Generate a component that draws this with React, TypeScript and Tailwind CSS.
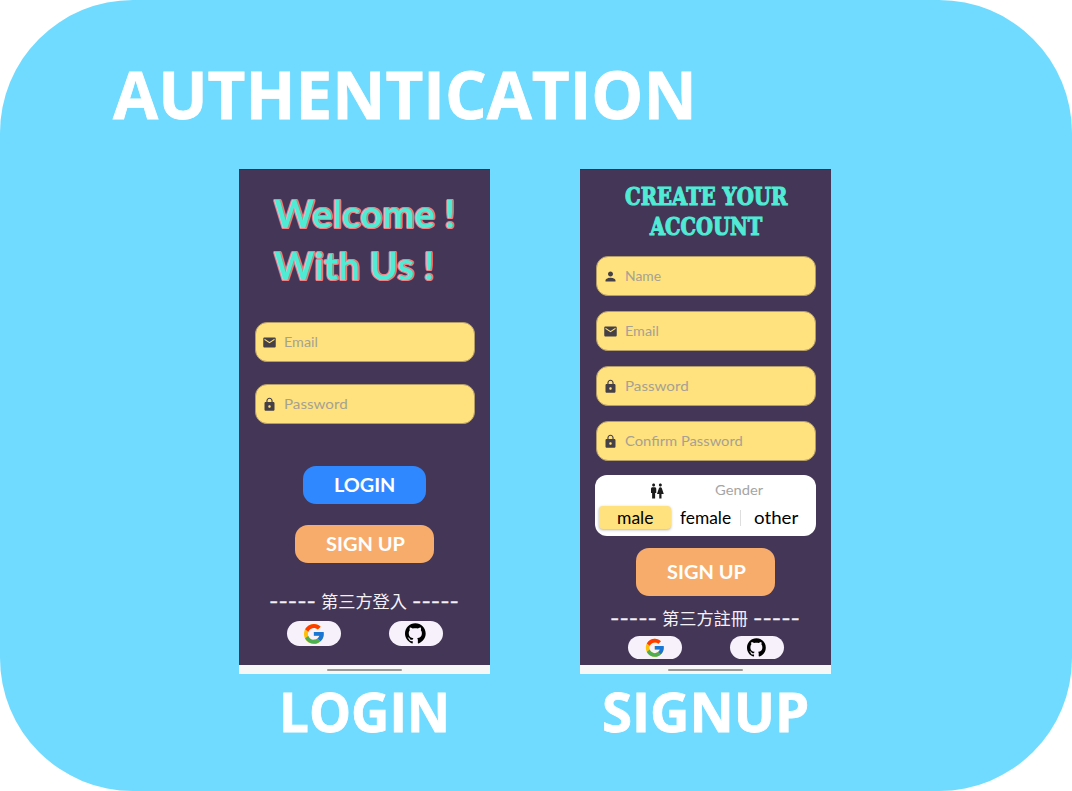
import { useLayoutEffect, useRef, useState } from "react";
import type { ReactNode } from "react";
import { MdPerson, MdEmail, MdLock, MdWc } from "react-icons/md";
import { FcGoogle } from "react-icons/fc";
import { SiGithub } from "react-icons/si";

/** One line of text, stretched horizontally so that it spans `width` pixels. */
function FitText({ width, className = "", children }: { width: number; className?: string; children: ReactNode }) {
  const ref = useRef<HTMLSpanElement>(null);
  const [scale, setScale] = useState(1);
  useLayoutEffect(() => {
    if (ref.current) setScale(width / ref.current.offsetWidth);
  }, [width]);
  return (
    <span className="block shrink-0" style={{ width }}>
      <span
        ref={ref}
        className={`inline-block origin-left align-top whitespace-pre ${className}`}
        style={{ transform: `scaleX(${scale})` }}
      >
        {children}
      </span>
    </span>
  );
}

function Field({ icon, label, width }: { icon: ReactNode; label: string; width: number }) {
  return (
    <div className="flex h-10 w-[220px] shrink-0 items-center rounded-[12px] border border-[#b59d69] bg-[#ffe17d] pl-[6px] text-[15px] text-[#454047]">
      {icon}
      <div className="ml-[7px] pt-[2px]">
        <FitText width={width} className="text-[13.5px] leading-5 text-[#a5a294]">{label}</FitText>
      </div>
    </div>
  );
}

function Divider({ text }: { text: string }) {
  return (
    <div className="mr-px flex h-6 items-center justify-center gap-[5px] text-[#f4f1f6]">
      <FitText width={47} className="pb-[2px] text-[21px] leading-6 [-webkit-text-stroke:0.3px_#f4f1f6]">-----</FitText>
      <FitText width={86} className="text-[17px] leading-6">{text}</FitText>
      <FitText width={47} className="pb-[2px] text-[21px] leading-6 [-webkit-text-stroke:0.3px_#f4f1f6]">-----</FitText>
    </div>
  );
}

function Providers({ compact = false }: { compact?: boolean }) {
  const pill = compact ? "h-[23px] text-[20px]" : "h-[25px] text-[22px]";
  return (
    <div className="flex justify-center gap-12">
      <button className={`flex w-[54px] items-center justify-center rounded-full bg-[#f6f1fa] ${pill}`}>
        <FcGoogle className="size-[1.08em]" />
      </button>
      <button className={`flex w-[54px] items-center justify-center rounded-full bg-[#f6f1fa] text-black ${pill}`}>
        <SiGithub className="size-[0.94em]" />
      </button>
    </div>
  );
}

function Phone({ children }: { children: ReactNode }) {
  return (
    <section className="flex h-[505px] w-[251px] flex-col border-t border-[#3c304c] bg-[#443657] font-['Lato','Noto_Sans_CJK_TC',sans-serif]">
      <div className="flex min-h-0 flex-1 flex-col items-center">{children}</div>
      <div className="flex h-[9px] items-center justify-center bg-[#f7f7f7]">
        <div className="h-[2px] w-[75px] rounded-full bg-[#999]" />
      </div>
    </section>
  );
}

const heroText =
  "text-[38px] font-bold leading-[52px] text-[#50ebd5] [text-shadow:1.3px_0_#f47f86,-1.3px_0_#f47f86,0_1.3px_#f47f86,0_-1.3px_#f47f86,1px_1px_#f47f86,-1px_1px_#f47f86,1px_-1px_#f47f86,-1px_-1px_#f47f86]";
const actionText = "text-[19.5px] font-bold leading-6 text-white";
const titleText =
  "font-['DejaVu_Serif',serif] text-[25px] font-bold leading-[30px] text-[#50ebd5] [-webkit-text-stroke:1.2px_#50ebd5]";

function LoginScreen() {
  return (
    <Phone>
      <div className="mt-[17px] w-[182px]">
        <FitText width={181} className={heroText}>Welcome !</FitText>
        <FitText width={160} className={heroText}>With Us !</FitText>
      </div>
      <div className="mt-[31px] flex flex-col gap-[22px]">
        <Field icon={<MdEmail />} label="Email" width={34} />
        <Field icon={<MdLock />} label="Password" width={64} />
      </div>
      <button className="mt-[42px] flex h-[38px] w-[123px] items-center justify-center rounded-[13px] bg-[#2f88ff]">
        <FitText width={61} className={actionText}>LOGIN</FitText>
      </button>
      <button className="mt-[21px] flex h-[38px] w-[139px] items-center justify-center rounded-[13px] bg-[#f7ac6c]">
        <FitText width={79} className={actionText}>SIGN UP</FitText>
      </button>
      <div className="mt-[27px]">
        <Divider text="第三方登入" />
      </div>
      <div className="mt-[7px]">
        <Providers />
      </div>
    </Phone>
  );
}

function SignupScreen() {
  return (
    <Phone>
      <div className="mt-[12px] flex flex-col items-center">
        <FitText width={162} className={titleText}>CREATE YOUR</FitText>
        <FitText width={112} className={titleText}>ACCOUNT</FitText>
      </div>
      <div className="mt-[14px] flex flex-col gap-[15px]">
        <Field icon={<MdPerson />} label="Name" width={36} />
        <Field icon={<MdEmail />} label="Email" width={34} />
        <Field icon={<MdLock />} label="Password" width={64} />
        <Field icon={<MdLock />} label="Confirm Password" width={118} />
      </div>
      <div className="mt-[14px] flex h-[61px] w-[221px] shrink-0 flex-col rounded-[12px] bg-white px-1 pt-[5px]">
        <div className="flex h-[21px] items-center pl-[49px]">
          <MdWc className="size-[18px] text-[#1c1c1c]" />
          <div className="ml-[49px] pt-[2px]">
            <FitText width={48} className="text-[13.5px] leading-5 text-[#a5a5a5]">Gender</FitText>
          </div>
        </div>
        <div className="mt-[5px] flex h-[23px] items-center text-[17px] leading-[23px] text-black">
          <div className="flex h-[23px] w-[72px] items-center justify-center rounded-[4px] bg-[#ffe17d] shadow-[0_1px_3px_rgba(0,0,0,0.3)]">
            <FitText width={36}>male</FitText>
          </div>
          <div className="flex w-[69px] justify-center">
            <FitText width={51}>female</FitText>
          </div>
          <div className="h-4 w-px bg-[#dedede]" />
          <div className="flex w-[70px] justify-center">
            <FitText width={44}>other</FitText>
          </div>
        </div>
      </div>
      <button className="mt-[12px] flex h-[48px] w-[139px] shrink-0 items-center justify-center rounded-[13px] bg-[#f7ac6c]">
        <FitText width={79} className={actionText}>SIGN UP</FitText>
      </button>
      <div className="mt-[11px]">
        <Divider text="第三方註冊" />
      </div>
      <div className="mt-[5px]">
        <Providers compact />
      </div>
    </Phone>
  );
}

export default function App() {
  const caption = "text-[54.5px] font-bold leading-[74px] [-webkit-text-stroke:0.8px_white]";
  return (
    <div className="h-[791px] w-[1072px] bg-white">
      <main className="h-full rounded-[133px] bg-[#70dbff] pt-[48px] font-['Open_Sans',sans-serif] text-white">
        <h1 className="pl-[113px] text-[67px] font-bold leading-[91px] [-webkit-text-stroke:0.8px_white]">
          <FitText width={584}>AUTHENTICATION</FitText>
        </h1>
        <div className="mt-[30px] flex gap-[90px] pl-[239px]">
          <div className="flex flex-col items-center">
            <LoginScreen />
            <FitText width={171} className={caption}>LOGIN</FitText>
          </div>
          <div className="flex flex-col items-center">
            <SignupScreen />
            <FitText width={207} className={caption}>SIGNUP</FitText>
          </div>
        </div>
      </main>
    </div>
  );
}
